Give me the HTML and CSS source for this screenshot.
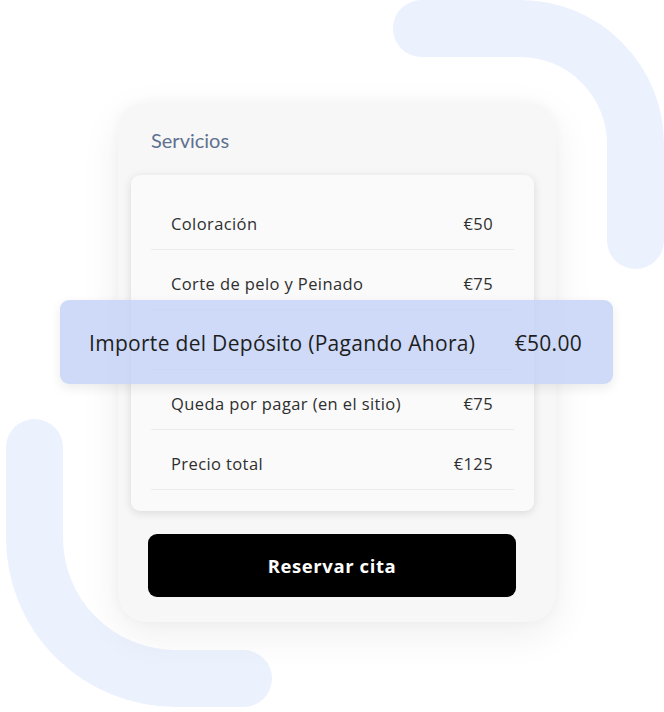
FILE: index.html
```html
<!DOCTYPE html>
<html lang="es">
<head>
  <meta charset="UTF-8" />
  <meta name="viewport" content="width=device-width, initial-scale=1.0">
  <title>Servicios</title>
  <link rel="stylesheet" href="styles.css">
</head>
<body>
  <div class="stage">
    <svg class="arcs" width="664" height="712" viewBox="0 0 664 712">
      <path d="M421.5 28.5 H520 A115.5 115.5 0 0 1 635.5 144 V240.5" />
      <path d="M34.5 447.5 V537.5 A141 141 0 0 0 175.5 678.5 H243.5" />
    </svg>

    <div class="panel">
      <h2 class="panel-title">Servicios</h2>

      <div class="summary">
        <div class="row"><span>Coloración</span><span>€50</span></div>
        <div class="row"><span>Corte de pelo y Peinado</span><span>€75</span></div>
        <!-- covered by the deposit banner -->
        <div class="row"></div>
        <div class="row"><span>Queda por pagar (en el sitio)</span><span>€75</span></div>
        <div class="row"><span>Precio total</span><span>€125</span></div>
      </div>

      <button class="book-btn">Reservar cita</button>
    </div>

    <div class="deposit">
      <span>Importe del Depósito (Pagando Ahora)</span>
      <span>€50.00</span>
    </div>
  </div>
</body>
</html>
```

FILE: styles.css
```css
body {
  margin: 0;
  background: #fff;
  font-family: "Open Sans", "Liberation Sans", sans-serif;
}
.stage {
  position: relative;
  width: 664px;
  height: 712px;
  overflow: hidden;
}
.arcs {
  position: absolute;
  left: 0;
  top: 0;
}
.arcs path {
  fill: none;
  stroke: #ebf1fd;
  stroke-width: 57;
  stroke-linecap: round;
}
.panel {
  position: relative;
  margin: 103px 0 0 118px;
  width: 438px;
  box-sizing: border-box;
  padding: 25px 0 25px 0;
  background: #f7f7f7;
  border-radius: 28px;
  box-shadow: 0 12px 40px rgba(0, 0, 0, 0.07), 0 0 12px rgba(0, 0, 0, 0.03);
}
.panel-title {
  margin: 0 0 0 33px;
  font-family: Lato, "Noto Sans", sans-serif;
  font-weight: 400;
  font-size: 20px;
  line-height: 24px;
  color: #5f7190;
}
.summary {
  margin: 23px 0 0 13px;
  width: 403px;
  box-sizing: border-box;
  padding: 15px 20px 21px;
  background: #fafafa;
  border-radius: 9px;
  box-shadow: 0 2px 10px rgba(0, 0, 0, 0.12);
}
.row {
  display: flex;
  justify-content: space-between;
  align-items: center;
  height: 60px;
  padding: 7px 21px 0 20px;
  box-sizing: border-box;
  border-bottom: 1px solid #ebebeb;
  font-size: 16.5px;
  font-weight: 500;
  color: #2e2e2e;
  letter-spacing: 0.4px;
}
.book-btn {
  display: block;
  margin: 23px 0 0 30px;
  width: 368px;
  height: 63px;
  border: none;
  border-radius: 9px;
  background: #000;
  color: #fff;
  font-family: "Open Sans", "Liberation Sans", sans-serif;
  font-weight: 700;
  font-size: 18.5px;
  letter-spacing: 0.6px;
}
.deposit {
  position: absolute;
  left: 60px;
  top: 300px;
  width: 553px;
  height: 84px;
  box-sizing: border-box;
  padding: 2px 31px 0 29px;
  display: flex;
  justify-content: space-between;
  align-items: center;
  background: rgba(198, 211, 246, 0.85);
  border-radius: 9px;
  box-shadow: 0 4px 12px rgba(0, 0, 0, 0.08);
  font-size: 21px;
  font-weight: 500;
  color: #1e1e1e;
  letter-spacing: 0.3px;
}
```
